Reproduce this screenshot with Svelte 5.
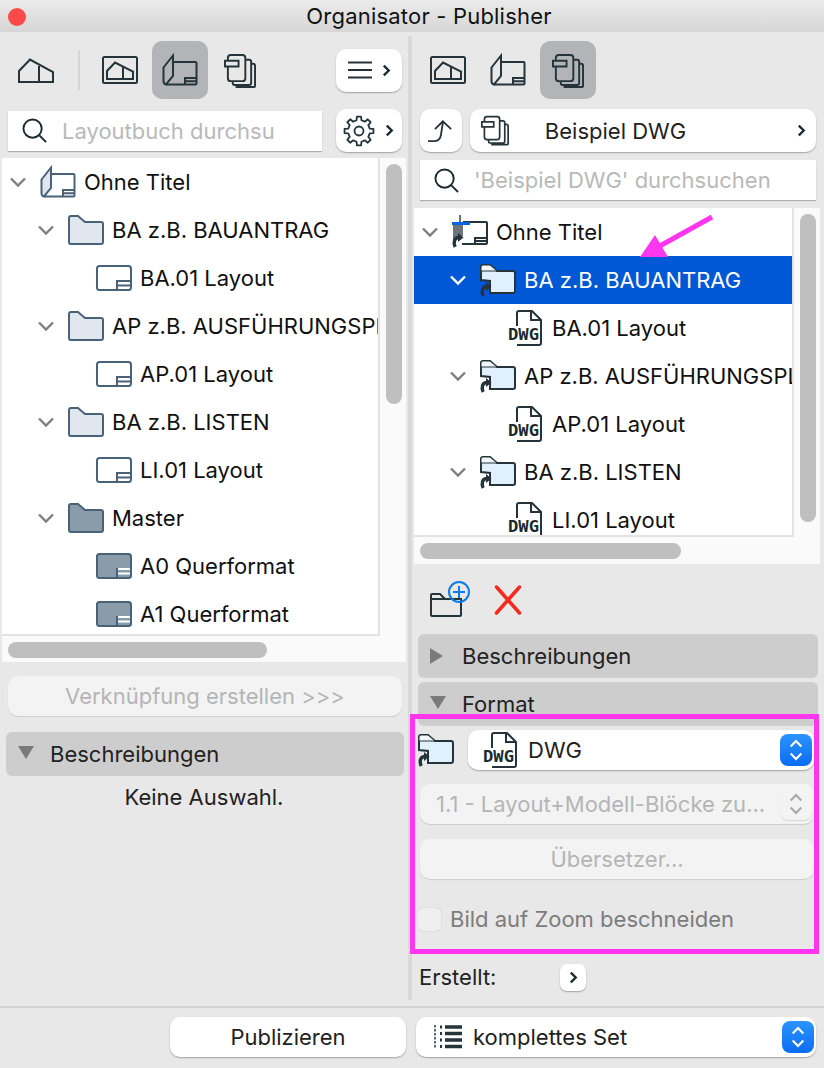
<script>
  const leftTree = [
    { d: 0, open: true, icon: 'book', label: 'Ohne Titel' },
    { d: 1, open: true, icon: 'folder', label: 'BA z.B. BAUANTRAG' },
    { d: 2, icon: 'sheet', label: 'BA.01 Layout' },
    { d: 1, open: true, icon: 'folder', label: 'AP z.B. AUSFÜHRUNGSPLAN' },
    { d: 2, icon: 'sheet', label: 'AP.01 Layout' },
    { d: 1, open: true, icon: 'folder', label: 'BA z.B. LISTEN' },
    { d: 2, icon: 'sheet', label: 'LI.01 Layout' },
    { d: 1, open: true, icon: 'masterfolder', label: 'Master' },
    { d: 2, icon: 'mastersheet', label: 'A0 Querformat' },
    { d: 2, icon: 'mastersheet', label: 'A1 Querformat' }
  ];
  const rightTree = [
    { d: 0, open: true, icon: 'pubroot', label: 'Ohne Titel' },
    { d: 1, open: true, icon: 'linkfolder', label: 'BA z.B. BAUANTRAG', selected: true },
    { d: 2, icon: 'dwg', label: 'BA.01 Layout' },
    { d: 1, open: true, icon: 'linkfolder', label: 'AP z.B. AUSFÜHRUNGSPLAN' },
    { d: 2, icon: 'dwg', label: 'AP.01 Layout' },
    { d: 1, open: true, icon: 'linkfolder', label: 'BA z.B. LISTEN' },
    { d: 2, icon: 'dwg', label: 'LI.01 Layout' }
  ];
  // eight-toothed gear outline
  const gearPath = (() => {
    const pts = [];
    for (let i = 0; i < 8; i++) {
      const a = (i * Math.PI) / 4 - Math.PI / 2;
      const s = Math.PI / 14;
      const n = Math.PI / 22;
      [[11, a - s], [14.6, a - n], [14.6, a + n], [11, a + s]].forEach(([r, t]) =>
        pts.push(`${(16 + r * Math.cos(t)).toFixed(2)} ${(16 + r * Math.sin(t)).toFixed(2)}`)
      );
    }
    return 'M' + pts.join('L') + 'Z';
  })();
</script>

{#snippet house()}
  <svg class="ico" viewBox="0 0 36 28"><path d="M1 26V15L12 3.500L35 16V26Z M21 10V26" /></svg>
{/snippet}
{#snippet plan()}
  <svg class="ico" viewBox="0 0 36 28"><rect x="1" y="1" width="34" height="26" rx="1.500" /><path d="M5 23V15L13 6.500L31 15.500V23Z M21 11V23" /></svg>
{/snippet}
{#snippet book(slate = false)}
  <svg class="ico" class:slate viewBox="0 0 36 32"><path d="M11 8H33.500a1 1 0 0 1 1 1V29.500a1 1 0 0 1-1 1H4 M23 30.500V24H34.500 M23 27.300H34.500" /><path class="sliver" d="M4 30.500Q1.500 30 1.500 27V13.500L11 1.500V22Z" /></svg>
{/snippet}
{#snippet sheets()}
  <svg class="ico sheetsico" viewBox="1 0 33 36"><path d="M5 8V5a3 3 0 0 1 3-3H20a3 3 0 0 1 3 3V26a3 3 0 0 1-3 3H8a3 3 0 0 1-3-3V14 M2 8H16V14H2Z M23 7h4a2 2 0 0 1 2 2V31a2 2 0 0 1-2 2H12a2 2 0 0 1-2-2V29 M29 11h2a2 2 0 0 1 2 2V34a1 1 0 0 1-1 1H13" /></svg>
{/snippet}
{#snippet sheet(master = false)}
  <svg class="ico slate pale" class:master viewBox="0 0 36 26"><rect class:blank={!master} x="1" y="1" width="34" height="24" rx="2.500" /><path class="tickv" d="M21 25V15" /><path class="tick" d="M22 16H34 M22 20.500H34" /></svg>
{/snippet}
{#snippet folder(master = false)}
  <svg class="ico slate pale" class:master viewBox="0 0 36 30"><path d="M1 27V3a2 2 0 0 1 2-2H10l7 6H33a2 2 0 0 1 2 2V27a2 2 0 0 1-2 2H3a2 2 0 0 1-2-2Z" /></svg>
{/snippet}
{#snippet arrow()}
  <path class="arr" d="M3.200 32C1 27 2.500 23 6.500 22.500" />
  <path class="arrhead" d="M6 18L11.500 22.500L6 27Z" />
{/snippet}
{#snippet linkfolder()}
  <svg class="ico" viewBox="0 0 36 33"><path class="lf" d="M1 16V3a2 2 0 0 1 2-2H10l7 6H33a2 2 0 0 1 2 2V27a2 2 0 0 1-2 2H10V17Z" /><path class="tab" d="M1 7V3a2 2 0 0 1 2-2H10l7 6Z" />{@render arrow()}</svg>
{/snippet}
{#snippet pubroot()}
  <svg class="ico" viewBox="0 0 36 34"><path d="M11 7H34a1 1 0 0 1 1 1V28a1 1 0 0 1-1 1H10 M23 29V23H35 M23 26H35" /><path class="gray" d="M1 10H11V21H5V25H1Z M7 0H9V7H7Z" /><path class="bluebar" d="M0 8.500H18" />{@render arrow()}</svg>
{/snippet}
{#snippet dwg(big = false)}
  <svg class="ico dwgicon" class:big viewBox="0 0 36 36"><path d="M9 16V3a2 2 0 0 1 2-2H24l9 9V33a2 2 0 0 1-2 2H9" /><path d="M23 1.500V10H33" /><text x="0" y="30" textLength="31" lengthAdjust="spacingAndGlyphs">DWG</text></svg>
{/snippet}
{#snippet chevron()}
  <svg class="chev" viewBox="0 0 18 12"><path d="M2 2.500L9 9.500L16 2.500" /></svg>
{/snippet}
{#snippet more()}
  <svg class="more" viewBox="0 0 10 14"><path d="M2 1.500L7.500 7L2 12.500" /></svg>
{/snippet}
{#snippet lens()}
  <svg class="lens" viewBox="0 0 26 26"><circle cx="11" cy="11" r="9.500" /><path d="M18 18L25 25" /></svg>
{/snippet}
{#snippet stepper(disabled = false)}
  <span class="step" class:off={disabled}>
    <svg viewBox="0 0 18 26"><path d="M3 9L9 3L15 9 M3 17L9 23L15 17" /></svg>
  </span>
{/snippet}
{#snippet tree(rows)}
  {#each rows as r}
    <div class="row" class:sel={r.selected} style="padding-left: {4 + 28 * r.d}px">
      <span class="chevbox">{#if r.open}{@render chevron()}{/if}</span>
      <span class="rowicon">
        {#if r.icon === 'book'}{@render book(true)}
        {:else if r.icon === 'folder'}{@render folder()}
        {:else if r.icon === 'masterfolder'}{@render folder(true)}
        {:else if r.icon === 'sheet'}{@render sheet()}
        {:else if r.icon === 'mastersheet'}{@render sheet(true)}
        {:else if r.icon === 'linkfolder'}{@render linkfolder()}
        {:else if r.icon === 'pubroot'}{@render pubroot()}
        {:else}{@render dwg()}{/if}
      </span>
      <span class="rowlabel">{r.label}</span>
    </div>
  {/each}
{/snippet}

<div class="win">
  <header class="title">
    <span class="close"></span>
    <span>Organisator - Publisher</span>
  </header>

  <main class="main">
    <section class="left">
      <div class="bar">
        <span class="tool first">{@render house()}</span>
        <span class="sep"></span>
        <span class="tool">{@render plan()}</span>
        <span class="tool active">{@render book()}</span>
        <span class="tool">{@render sheets()}</span>
        <button class="btn menu">
          <svg class="lines" viewBox="0 0 24 18"><path d="M0 1.500H24 M0 9H24 M0 16.500H24" /></svg>
          {@render more()}
        </button>
      </div>
      <div class="searchrow">
        <div class="search grow">{@render lens()}<span class="ph">Layoutbuch durchsu</span></div>
        <button class="btn menu">
          <svg class="gear" viewBox="0 0 32 32"><path d={gearPath} /><circle cx="16" cy="16" r="4.500" /></svg>
          {@render more()}
        </button>
      </div>
      <div class="treewrap lefttree">
        <div class="treeinner">
          <div class="list">{@render tree(leftTree)}</div>
          <div class="vgutter"><span class="vthumb lv"></span></div>
        </div>
        <div class="hgutter"><span class="hthumb lh"></span></div>
      </div>
      <button class="btn wide off link">Verknüpfung erstellen &gt;&gt;&gt;</button>
      <div class="section leftsec"><span class="tri down"></span>Beschreibungen</div>
      <p class="none">Keine Auswahl.</p>
    </section>

    <span class="divider"></span>

    <section class="right">
      <div class="bar rbar">
        <span class="tool">{@render plan()}</span>
        <span class="tool">{@render book()}</span>
        <span class="tool active">{@render sheets()}</span>
      </div>
      <div class="navrow">
        <button class="btn up">
          <svg class="upico" viewBox="0 0 30 26"><path d="M1 24H8Q14 24 15 17L17 4 M8.500 11L17 2.500L26 11" /></svg>
        </button>
        <button class="btn navsel">
          <span class="navico">{@render sheets()}</span>
          <span class="navlabel">Beispiel DWG</span>
          {@render more()}
        </button>
      </div>
      <div class="search rsearch">{@render lens()}<span class="ph">'Beispiel DWG' durchsuchen</span></div>
      <div class="treewrap righttree">
        <div class="treeinner">
          <div class="list">{@render tree(rightTree)}</div>
          <div class="vgutter"><span class="vthumb rv"></span></div>
        </div>
        <div class="hgutter"><span class="hthumb rh"></span></div>
      </div>
      <div class="actions">
        <svg class="newfolder" viewBox="0 0 40 36"><path d="M1 34V14a1 1 0 0 1 1-1H10l5 5H31V34a1 1 0 0 1-1 1H2a1 1 0 0 1-1-1Z M1 18H15" /><circle cx="29" cy="11" r="10" class="plus" /><path d="M29 5V17 M23 11H35" class="plus" /></svg>
        <svg class="del" viewBox="0 0 28 32"><path d="M2.500 3L25.500 29 M25.500 3L2.500 29" /></svg>
      </div>
      <div class="section"><span class="tri"></span>Beschreibungen</div>
      <div class="section fmt"><span class="tri down"></span>Format</div>
      <div class="format">
        <div class="fmtrow">
          <span class="fmtfolder">{@render linkfolder()}</span>
          <button class="btn pick">
            {@render dwg(true)}
            <span class="picklabel">DWG</span>
            {@render stepper()}
          </button>
        </div>
        <button class="btn pick off sub">
          <span class="picklabel">1.1 - Layout+Modell-Blöcke zu...</span>
          {@render stepper(true)}
        </button>
        <button class="btn off trans">Übersetzer...</button>
        <label class="check"><span class="box"></span>Bild auf Zoom beschneiden</label>
      </div>
      <div class="created">
        <span class="crlabel">Erstellt:</span>
        <button class="btn crbtn">{@render more()}</button>
      </div>
    </section>
  </main>

  <footer class="foot">
    <button class="btn pub">Publizieren</button>
    <button class="btn pick setsel">
      <svg class="listico" viewBox="0 0 28 24"><path d="M1 0V23" stroke-dasharray="2.500 1.500" /><path d="M6 2H8 M6 8.500H8 M6 15H8 M6 21.500H8" stroke-width="3" /><path d="M11 2H28 M11 8.500H28 M11 15H28 M11 21.500H28" stroke-width="3.500" /></svg>
      <span class="picklabel">komplettes Set</span>
      {@render stepper()}
    </button>
  </footer>

  <svg class="pointer" viewBox="0 0 90 50"><path d="M82 2L28 32" /><path d="M10 42L25 20L38 42Z" class="head" /></svg>
  <div class="mark"></div>
</div>

<style>
  :global(body) { margin: 0; background: #e8e8e8; }
  .win {
    position: relative; width: 824px; height: 1068px; overflow: hidden;
    display: flex; flex-direction: column; background: #e8e8e8; color: #222;
    font-family: Inter, "Liberation Sans", sans-serif; font-size: 22px;
  }
  button { font: inherit; color: inherit; border: 0; padding: 0; margin: 0; }
  .title {
    height: 32px; flex: none; position: relative; display: flex; align-items: center; justify-content: center;
    background: linear-gradient(#ebebeb, #d6d6d6); color: #111; letter-spacing: .2px; padding-left: 34px; box-sizing: border-box;
  }
  .close { position: absolute; left: 8px; top: 8px; width: 18px; height: 18px; border-radius: 50%; background: #fc4a4a; }
  .main { flex: none; height: 974px; display: flex; }
  .left { width: 406px; flex: none; padding-left: 2px; box-sizing: border-box; }
  .divider { width: 4px; height: 964px; margin: 4px 0 0 2px; background: #d9d9d9; flex: none; }
  .right { flex: 1; min-width: 0; padding-left: 2px; }
  .bar { display: flex; align-items: center; gap: 4px; height: 58px; margin-top: 9px; padding-left: 16px; }
  .rbar { padding-left: 6px; }
  .tool { width: 56px; height: 58px; border-radius: 10px; display: flex; align-items: center; justify-content: center; flex: none; }
  .tool.first { width: 36px; }
  .sep { width: 2px; height: 40px; background: #d5d5d5; margin: 0 8px 0 20px; flex: none; }
  .active { background: #b3b4b8; }
  .ico { width: 36px; height: auto; fill: none; stroke: #25343a; stroke-width: 2; display: block; overflow: visible; }
  .sheetsico { width: 32px; }
  .ico.slate { stroke: #4a6278; }
  .ico.pale { fill: #e1e7ef; }
  .ico.pale .blank { fill: none; }
  .ico.master { fill: #8a9ba9; }
  .tick, .tickv { fill: none; }
  .ico.slate .tick { stroke: #4a6278; }
  .ico.master .tick { stroke: #fff; }
  .ico.slate .sliver { fill: #dfe6ee; }
  .lf { fill: #e0f0fd; }
  .tab { fill: #f3f7fb; stroke-width: 1; }
  .arr { stroke: #25343a; stroke-width: 3.400; fill: none; }
  .arrhead { fill: #25343a; stroke: none; }
  .gray { fill: #6d7479; stroke: none; }
  .bluebar { stroke: #0a66e0; stroke-width: 3; }
  .btn { background: #fff; border-radius: 10px; box-shadow: 0 1px 1.500px rgba(0,0,0,.3); display: flex; align-items: center; justify-content: center; }
  .menu { width: 66px; height: 43px; flex: none; gap: 10px; margin-left: auto; margin-right: 4px; }
  .lines { width: 24px; height: 18px; fill: none; stroke: #25343a; stroke-width: 2; }
  .more { width: 9px; height: 13px; fill: none; stroke: #1b2a30; stroke-width: 2.600; flex: none; }
  .gear { width: 32px; height: 32px; fill: none; stroke: #25343a; stroke-width: 1.800; stroke-linejoin: round; margin-left: -2px; }
  .searchrow { display: flex; align-items: center; gap: 14px; margin-top: 10px; padding-left: 6px; height: 43px; }
  .search { height: 40px; background: #fff; box-shadow: 0 1px 1px rgba(0,0,0,.25); display: flex; align-items: center; padding-left: 14px; gap: 15px; box-sizing: border-box; }
  .grow { width: 314px; flex: none; }
  .ph { color: #b9b9b9; }
  .lens { width: 25px; height: 25px; fill: none; stroke: #1b2a30; stroke-width: 2; flex: none; }
  .treewrap { background: #fafafa; overflow: hidden; }
  .lefttree { margin-top: 6px; height: 504px; width: 404px; }
  .righttree { margin-top: 8px; height: 356px; width: 406px; }
  .treeinner { display: flex; }
  .lefttree .treeinner { height: 478px; }
  .righttree .treeinner { height: 329px; }
  .list { flex: 1; min-width: 0; background: #fff; overflow: hidden; border-right: 2px solid #e3e3e3; border-bottom: 2px solid #e3e3e3; }
  .vgutter { width: 26px; flex: none; position: relative; }
  .vthumb { position: absolute; left: 6px; width: 16px; border-radius: 8px; background: #bfbfbf; }
  .lv { top: 6px; height: 240px; }
  .rv { top: 6px; height: 308px; }
  .hgutter { position: relative; height: 26px; }
  .hthumb { position: absolute; top: 6px; height: 16px; border-radius: 8px; background: #bfbfbf; }
  .lh { left: 6px; width: 259px; }
  .rh { left: 6px; width: 261px; }
  .row { height: 48px; display: flex; align-items: center; white-space: nowrap; color: #111; box-sizing: border-box; }
  .row.sel { background: #0058d6; color: #fff; }
  .chevbox { width: 24px; flex: none; display: flex; justify-content: center; }
  .chev { width: 18px; height: 12px; fill: none; stroke: #7f7f7f; stroke-width: 2.400; }
  .sel .chev { stroke: #fff; }
  .rowicon { width: 36px; margin: 0 8px 0 10px; flex: none; display: flex; align-items: center; }
  .dwgicon text { fill: #1b2a30; stroke: none; font: 700 16px "DejaVu Sans Mono", monospace; }
  .dwgicon.big { flex: none; margin-left: 15px; }
  .link { width: 394px; height: 40px; margin: 14px 0 0 6px; }
  .off { background: #f3f3f3; color: #b5b5b5; box-shadow: 0 1px 1px rgba(0,0,0,.12); }
  .section { height: 44px; background: #cdcdcd; border-radius: 6px; display: flex; align-items: center; box-sizing: border-box; }
  .leftsec { width: 398px; margin: 16px 0 0 4px; padding-left: 12px; }
  .tri { width: 0; height: 0; border-left: 13px solid #7a7a7a; border-top: 8px solid transparent; border-bottom: 8px solid transparent; margin: 0 19px 0 12px; flex: none; }
  .tri.down { border-left: 8.500px solid transparent; border-right: 8.500px solid transparent; border-top: 13px solid #7a7a7a; border-bottom: 0; margin: -4px 16px 0 0; }
  .right .section { width: 400px; margin-left: 4px; }
  .right .tri.down { margin-left: 12px; margin-right: 16px; }
  .fmt { margin-top: 4px; }
  .none { margin: 8px 0 0; text-align: center; }
  .navrow { display: flex; gap: 8px; margin-top: 10px; padding-left: 6px; height: 43px; }
  .up { width: 42px; flex: none; }
  .upico { width: 28px; height: 24px; fill: none; stroke: #25343a; stroke-width: 2; }
  .navsel { width: 346px; flex: none; padding: 0 10px 0 11px; justify-content: flex-start; box-sizing: border-box; }
  .navico { width: 29px; flex: none; }
  .navico :global(.ico) { width: 28px; }
  .navlabel { flex: 1; text-align: center; padding-right: 76px; }
  .rsearch { width: 396px; margin: 8px 0 0 6px; }
  .actions { height: 70px; position: relative; display: flex; align-items: center; padding-left: 16px; gap: 24px; }
  .newfolder { width: 40px; height: 36px; fill: none; stroke: #25343a; stroke-width: 2; }
  .newfolder .plus { stroke: #0a7cf0; }
  .del { width: 28px; height: 32px; fill: none; stroke: #f5291c; stroke-width: 3.500; stroke-linecap: round; margin-top: 2px; }
  .format { height: 230px; padding: 4px 10px 0 4px; box-sizing: border-box; position: relative; display: flex; flex-direction: column; }
  .fmtrow { display: flex; align-items: center; gap: 14px; height: 40px; flex: none; }
  .fmtfolder { width: 36px; flex: none; }
  .pick { flex: 1; height: 40px; justify-content: flex-start; position: relative; }
  .picklabel { margin-left: 9px; }
  .sub { width: 394px; flex: none; margin: 14px 0 0 2px; padding-left: 7px; box-sizing: border-box; }
  .step { position: absolute; right: 2px; top: 4px; width: 32px; height: 32px; border-radius: 8px; background: linear-gradient(#2b94ff, #0a6cf2); display: flex; align-items: center; justify-content: center; }
  .step.off { background: none; }
  .step svg { width: 16px; height: 24px; fill: none; stroke: #fff; stroke-width: 2.400; }
  .step.off svg { stroke: #a8a8a8; }
  .trans { width: 394px; height: 40px; margin: 15px 0 0 2px; flex: none; }
  .check { display: flex; align-items: center; gap: 9px; margin-top: 28px; color: #7c7c7c; height: 24px; }
  .box { width: 23px; height: 23px; border-radius: 5px; background: #efefef; box-shadow: 0 0 1px rgba(0,0,0,.3); flex: none; }
  .created { display: flex; align-items: center; height: 28px; margin-top: 7px; padding-left: 5px; color: #222; }
  .crlabel { width: 141px; flex: none; }
  .crbtn { width: 26px; height: 27px; border-radius: 7px; flex: none; }
  .foot { flex: 1; border-top: 2px solid #d3d3d3; display: flex; align-items: center; padding: 0 8px 2px 170px; gap: 10px; }
  .pub { width: 236px; height: 40px; flex: none; }
  .setsel { width: 400px; flex: none; }
  .listico { width: 28px; height: 24px; fill: none; stroke: #25343a; stroke-width: 1.500; margin-left: 18px; flex: none; }
  .setsel .picklabel { margin-left: 11px; }
  .pointer { position: absolute; left: 630px; top: 215px; width: 90px; height: 50px; fill: none; stroke: #ff36ee; stroke-width: 5; overflow: visible; pointer-events: none; }
  .pointer .head { fill: #ff36ee; stroke: none; }
  .mark { position: absolute; left: 410px; top: 714px; width: 399px; height: 230px; border: 5px solid #ff36ee; pointer-events: none; }
</style>
